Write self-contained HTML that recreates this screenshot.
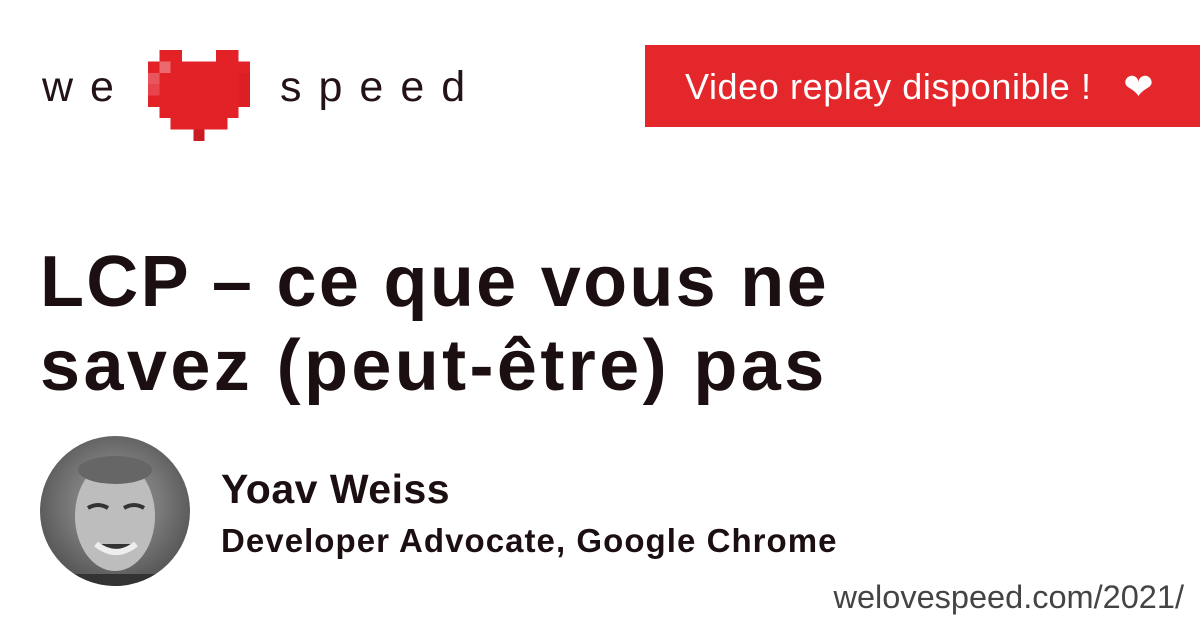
<!DOCTYPE html>
<html><head><meta charset="utf-8"><style>
body{margin:0;width:1200px;height:627px;background:#fff;position:relative;overflow:hidden;font-family:"Liberation Sans",sans-serif;color:#1c0f12}
.logo{position:absolute;top:62px;font-size:43px;letter-spacing:17px;color:#24121a;line-height:50px}
.btn{position:absolute;left:645px;top:45px;width:555px;height:82px;background:#e3272b;color:#fff;font-size:36px;letter-spacing:0.6px;line-height:84px;box-sizing:border-box;padding-left:40px}
h1{position:absolute;left:40px;top:240px;margin:0;font-size:72px;line-height:84px;font-weight:bold;letter-spacing:2.3px}
h1 span{letter-spacing:3.4px}
.photo{position:absolute;left:40px;top:436px;width:150px;height:150px;border-radius:50%;background:radial-gradient(circle at 50% 45%,#9a9a9a 0,#7a7a7a 40%,#5a5a5a 70%,#4a4a4a 100%);overflow:hidden}
.name{position:absolute;left:221px;top:466px;font-size:41px;font-weight:bold;line-height:46px;letter-spacing:0.5px}
.role{position:absolute;left:221px;top:521px;font-size:33px;font-weight:bold;line-height:40px;letter-spacing:1.05px}
.url{position:absolute;right:16px;top:577px;font-size:32.5px;color:#444;line-height:40px}
</style></head><body>
<div class="logo" style="left:42px">we</div>
<svg style="position:absolute;left:148px;top:50px" width="102" height="91" viewBox="0 0 9 8" shape-rendering="crispEdges">
<g fill="#e32228">
<rect x="1" y="0" width="2" height="1"/><rect x="6" y="0" width="2" height="1"/>
<rect x="0" y="1" width="9" height="4"/>
<rect x="1" y="5" width="7" height="1"/>
<rect x="2" y="6" width="5" height="1"/>
<rect x="4" y="7" width="1" height="1" fill="#c81b22"/>
</g>
<rect x="1" y="1" width="1" height="1" fill="#ea6a70"/><rect x="0" y="2" width="1" height="1" fill="#e8555b"/>
<rect x="0" y="3" width="1" height="1" fill="#e7454b"/>
<rect x="8" y="2" width="1" height="3" fill="#dc1f25"/>
</svg>
<div class="logo" style="left:280px">speed</div>
<div class="btn">Video replay disponible !&nbsp;&nbsp;&nbsp;❤</div>
<h1>LCP – ce que vous ne<br><span>savez (peut-être) pas</span></h1>
<div class="photo"><svg width="150" height="150" viewBox="0 0 150 150"><ellipse cx="75" cy="80" rx="40" ry="55" fill="#bdbdbd"/><ellipse cx="75" cy="34" rx="37" ry="14" fill="#666"/><path d="M48 72 q10-6 20 0 M84 72 q10-6 20 0" stroke="#333" stroke-width="4" fill="none"/><path d="M56 108 q20 16 40 0" stroke="#eee" stroke-width="6" fill="#333"/><rect x="30" y="138" width="90" height="20" fill="#333"/></svg></div>
<div class="name">Yoav Weiss</div>
<div class="role">Developer Advocate, Google Chrome</div>
<div class="url">welovespeed.com/2021/</div>
</body></html>
